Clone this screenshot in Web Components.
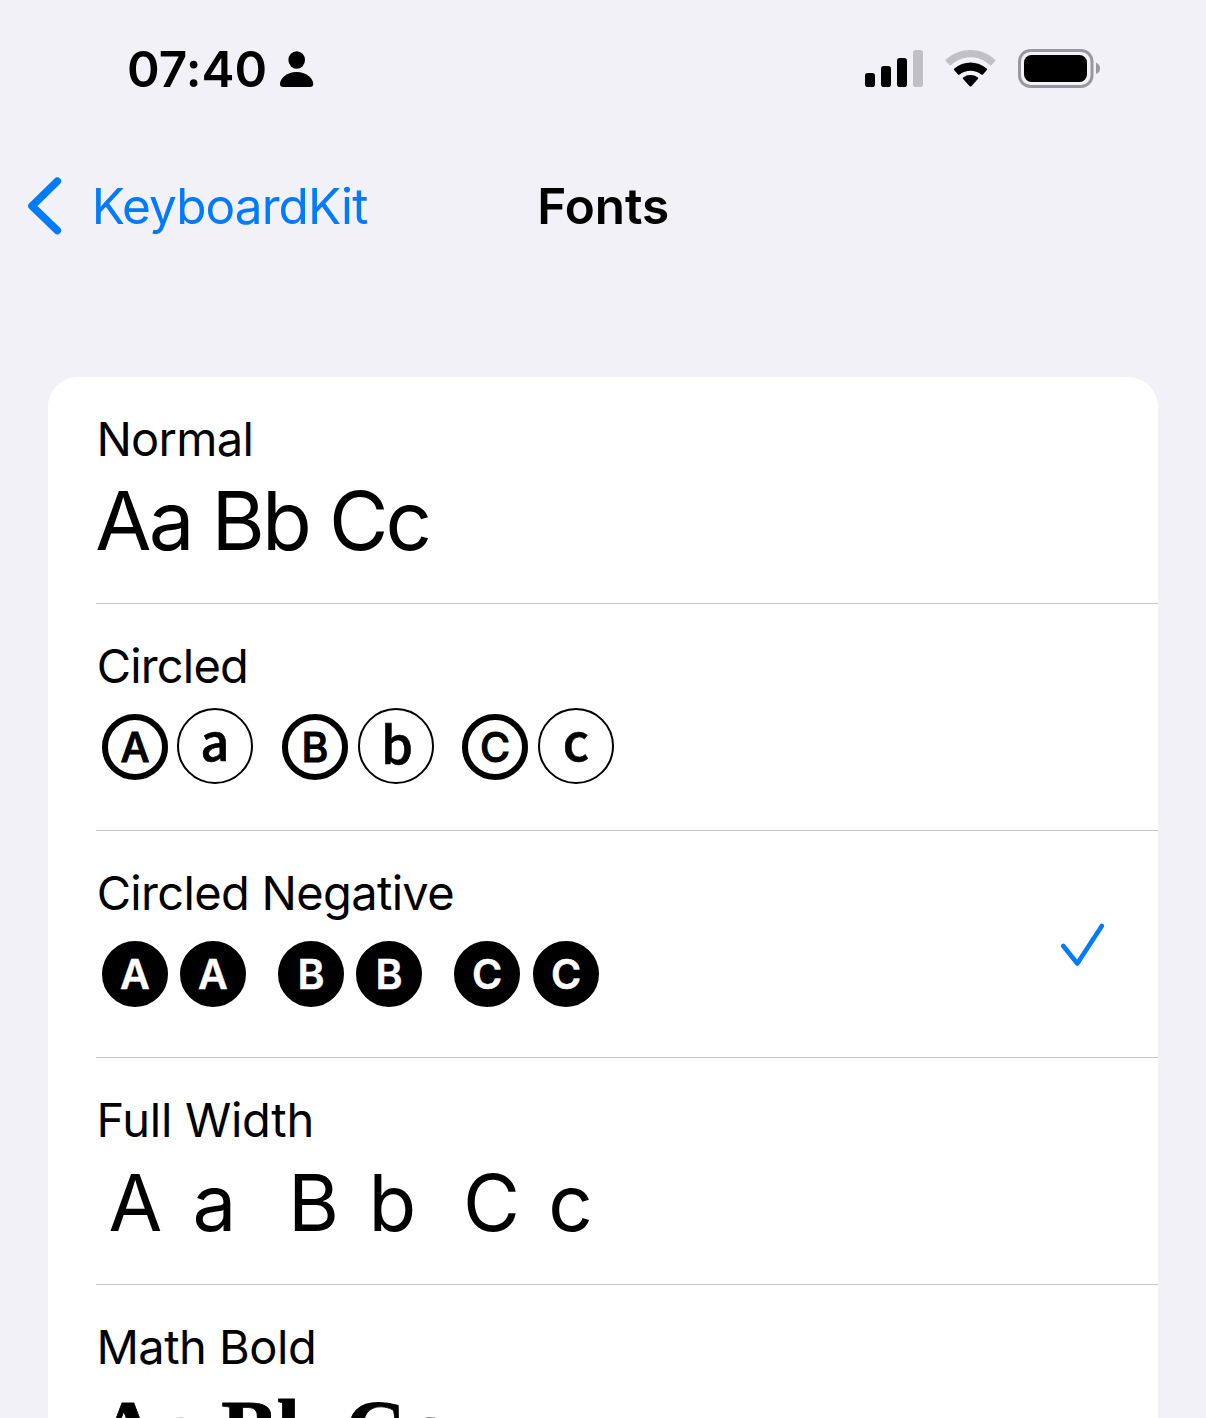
<!DOCTYPE html>
<html lang="en">
<head>
<meta charset="utf-8">
<title>Fonts</title>
<style>
html, body { margin: 0; height: 1418px; overflow: hidden; background: #f2f1f7; }
body { font-family: Inter, "Liberation Sans", sans-serif; color: #000; }
</style>
</head>
<body>
<settings-screen></settings-screen>
<script>
const define = (name, html, setup) => customElements.define(name, class extends HTMLElement {
  connectedCallback() {
    if (this.shadowRoot) return;
    this.attachShadow({ mode: 'open' }).innerHTML = html;
    if (setup) setup(this, this.shadowRoot);
  }
});

/* A line of text tracked so that its ink fills a given width. */
define('tracked-text', `<style>
:host { display: block; white-space: pre; flex: none; font-kerning: normal; }
</style><slot></slot>`, host => {
  const s = getComputedStyle(host), text = host.textContent;
  const c = document.createElement('canvas').getContext('2d');
  c.font = `${s.fontWeight} ${s.fontSize} ${s.fontFamily}`;
  const m = c.measureText(text);
  const ink = m.actualBoundingBoxRight + m.actualBoundingBoxLeft;
  host.style.letterSpacing = ((+host.getAttribute('ink') - ink) / (text.length - 1)).toFixed(3) + 'px';
  host.style.marginLeft = (+host.getAttribute('start') + m.actualBoundingBoxLeft).toFixed(2) + 'px';
});

define('status-bar', `<style>
:host { display: flex; height: 137px; }
.time { font-size: 49.5px; font-weight: 600; line-height: 60px; width: 280px; margin-top: 39px; }
.person { margin-top: 50px; }
.right { display: flex; margin: 48px 105px 0 auto; gap: 22px; }
svg { display: block; flex: none; }
</style>
<div class="time"><tracked-text start="129" ink="136.5">07:40</tracked-text></div>
<svg class="person" width="34" height="38" viewBox="0 0 34 38"><ellipse cx="16.7" cy="10" rx="8.3" ry="8.8"/><path d="M3.5 37C1 37 0 36 0 34C0 29 6 22 16.6 22S33.2 29 33.2 34C33.2 36 32.2 37 29.7 37Z"/></svg>
<div class="right">
<svg width="58" height="40" viewBox="0 0 58 40"><rect y="25" width="10" height="14" rx="2.8"/><rect x="16" y="18" width="10" height="21" rx="2.8"/><rect x="32" y="10" width="10" height="29" rx="2.8"/><rect x="48" y="2" width="10" height="37" rx="2.8" fill="#c1c0c5"/></svg>
<svg width="51" height="40" viewBox="0 0 51 40"><path d="M.8 13.3Q0 12.5.8 11.7C14.5-1.2 36.5-1.2 50.2 11.7Q51 12.5 50.2 13.3L46.5 17Q45.7 17.8 44.9 17C33.5 6.5 17.5 6.5 6.1 17Q5.3 17.8 4.5 17Z" fill="#c1c0c5"/><path d="M9.3 22.2Q8.5 21.4 9.3 20.6C18.5 12.6 32.5 12.6 41.7 20.6Q42.5 21.4 41.7 22.2L37.9 26.4Q37.1 27.2 36.3 26.4C30 21.5 21 21.5 14.7 26.4Q13.9 27.2 13.1 26.4Z"/><path d="M18.1 31Q17.3 30.2 18.1 29.5C22.3 26.2 28.7 26.2 32.9 29.5Q33.7 30.2 32.9 31L26.3 38.2Q25.5 39 24.7 38.2Z"/></svg>
<svg width="83" height="41" viewBox="0 0 83 41"><rect x="1.5" y="2.5" width="72.5" height="36" rx="11" fill="none" stroke="#99989d" stroke-width="3"/><rect x="6" y="7" width="63" height="27" rx="7.5"/><path d="M78 14.5Q82 16.5 82 20.5T78 26Z" fill="#99989d"/></svg>
</div>`);

define('nav-bar', `<style>
:host { display: flex; height: 240px; color: #007aff; line-height: 60px; font-size: 49.5px; }
svg { margin: 37px 0 0 24px; flex: none; display: block; }
.back { width: 476px; margin-top: 39px; }
.title { margin-top: 39px; color: #000; font-weight: 600; }
</style>
<svg width="40" height="64" viewBox="0 0 40 64"><path d="M33.3 7.2 8 32 33.3 56.5" fill="none" stroke="currentColor" stroke-width="7.6" stroke-linecap="round" stroke-linejoin="round"/></svg>
<div class="back"><tracked-text start="31.7" ink="272.5">KeyboardKit</tracked-text></div>
<div class="title"><tracked-text start=".3" ink="127.7">Fonts</tracked-text></div>`);

define('check-mark', `<style>:host { display: block; flex: none; }svg { display: block; }</style>
<svg width="46" height="46" viewBox="0 0 46 46"><path d="M3.3 23 17.3 40.5 41.8 3" fill="none" stroke="#007aff" stroke-width="4.6" stroke-linecap="round" stroke-linejoin="round"/></svg>`);

define('font-row', `<style>
:host { display: flex; box-sizing: border-box; height: 227px; margin-left: 48px; border-bottom: 1px solid #c6c6c8; align-items: flex-start; }
.text { flex: 1; padding-top: 32px; }
.label { height: 69px; font-size: 47px; line-height: 60px; }
.mark { margin: 92px 52px 0 0; }
</style>
<div class="text"><div class="label"><slot name="label"></slot></div><slot></slot></div>
<div class="mark"><slot name="mark"></slot></div>`);

define('sample-line', `<style>
:host { display: block; font-size: 81.5px; line-height: 84px; padding-top: 1px; }
</style><slot></slot>`);

/* Bold serif sample with slightly taller lowercase letters. */
define('serif-line', `<style>
:host { display: block; font: bold 84px/84px "Liberation Serif", serif; padding: 3px 0 0 1.5px; white-space: pre; -webkit-text-stroke: .8px #000; }
span { font-size: 86px; line-height: 0; letter-spacing: -1px; }
</style>A<span>a</span> B<span>b</span> C<span>c</span>`);

/* Letters inside rings or discs. */
define('circled-line', `<style>
:host { display: flex; align-items: center; height: 76px; padding-top: 3px; }
</style><slot></slot>`);

define('circled-letter', `<style>
:host { display: flex; box-sizing: border-box; width: 66px; height: 66px; border: 6px solid #000; border-radius: 50%;
  align-items: center; justify-content: center; flex: none; font-size: 41px; font-weight: 500; line-height: 54px; position: relative; top: 1px;
  -webkit-text-stroke: 1px currentColor; }
span { position: relative; top: 0; }
:host([small]) { width: 76px; height: 76px; border-width: 2px; top: 0; font: 500 51px/72px "Noto Sans CJK JP", sans-serif; -webkit-text-stroke: .6px currentColor; }
:host([small]) span { top: -7.5px; }
:host([small][tall]) span { top: -4.5px; left: 1px; }
:host([negative]) { background: #000; color: #fff; font-weight: 600; -webkit-text-stroke-width: .5px; }
</style><span><slot></slot></span>`, host => { host.style.marginLeft = host.getAttribute('gap') + 'px'; });

define('wide-line', `<style>
:host { display: flex; gap: 20px; font-size: 78px; line-height: 84px; padding-top: 2px; }
</style><slot></slot>`);
define('wide-pair', `<style>
:host { display: flex; }
span { width: 79px; text-align: center; }
</style>`, (host, root) => {
  for (const ch of host.getAttribute('letters')) {
    const s = document.createElement('span'); s.textContent = ch; root.append(s);
  }
});

define('font-list', `<style>
:host { display: block; margin: 0 48px; height: 1041px; overflow: hidden; background: #fff; border-radius: 30px 30px 0 0; }
</style><slot></slot>`);

define('settings-screen', `<style>:host { display: block; }</style>
<status-bar></status-bar>
<nav-bar></nav-bar>
<font-list>
<font-row><tracked-text slot="label" start="4.4" ink="150">Normal</tracked-text>
<sample-line><tracked-text start="1.3" ink="331.3">Aa Bb Cc</tracked-text></sample-line></font-row>
<font-row><tracked-text slot="label" start="2.7" ink="147.3">Circled</tracked-text>
<circled-line><circled-letter gap="6">A</circled-letter><circled-letter small gap="9">a</circled-letter><circled-letter gap="29">B</circled-letter><circled-letter small tall gap="10">b</circled-letter><circled-letter gap="28">C</circled-letter><circled-letter small gap="10">c</circled-letter></circled-line></font-row>
<font-row><tracked-text slot="label" start="2.7" ink="354.5">Circled Negative</tracked-text>
<circled-line><circled-letter negative gap="6">A</circled-letter><circled-letter negative gap="12">A</circled-letter><circled-letter negative gap="32">B</circled-letter><circled-letter negative gap="12">B</circled-letter><circled-letter negative gap="32">C</circled-letter><circled-letter negative gap="13">C</circled-letter></circled-line>
<check-mark slot="mark"></check-mark></font-row>
<font-row><tracked-text slot="label" start="4.4" ink="211">Full Width</tracked-text>
<wide-line><wide-pair letters="Aa"></wide-pair><wide-pair letters="Bb"></wide-pair><wide-pair letters="Cc"></wide-pair></wide-line></font-row>
<font-row><tracked-text slot="label" start="4.4" ink="213.5">Math Bold</tracked-text>
<serif-line></serif-line></font-row>
</font-list>`);
</script>
</body>
</html>
